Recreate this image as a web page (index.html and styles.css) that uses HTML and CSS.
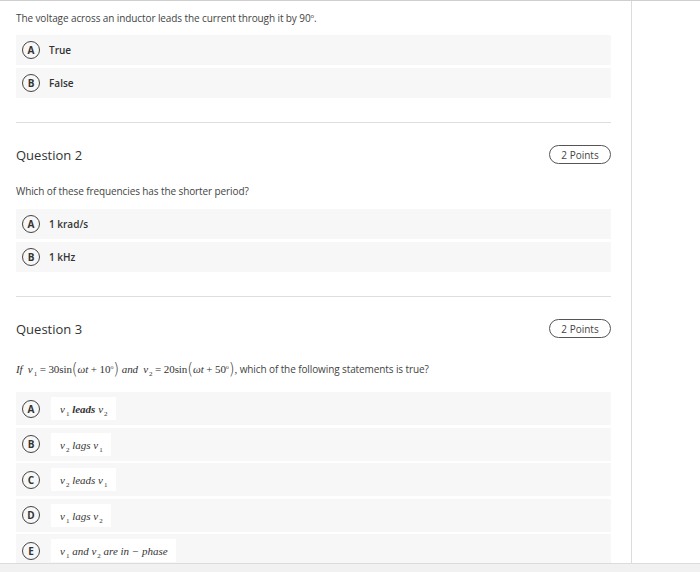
FILE: index.html
```html
<!DOCTYPE html>
<html>
<head>
<meta charset="utf-8">
<link rel="stylesheet" href="styles.css">
</head>
<body>
<div class="page">
  <div class="main">
    <div class="content">
      <div class="question first">
        <p class="qtext">The voltage across an inductor leads the current through it by 90<sup>o</sup>.</p>
        <div class="opt"><span class="letter">A</span><span class="otext">True</span></div>
        <div class="opt"><span class="letter">B</span><span class="otext">False</span></div>
      </div>

      <div class="question">
        <div class="qhead"><h2>Question 2</h2><span class="points">2 Points</span></div>
        <p class="qtext">Which of these frequencies has the shorter period?</p>
        <div class="opt"><span class="letter">A</span><span class="otext">1 krad/s</span></div>
        <div class="opt"><span class="letter">B</span><span class="otext">1 kHz</span></div>
      </div>

      <div class="question">
        <div class="qhead"><h2>Question 3</h2><span class="points">2 Points</span></div>
        <p class="qtext q3"><span class="math"><i>If</i> &nbsp;<i>v</i><sub>1</sub> = 30sin<span class="par">(</span><i>ωt</i> + 10<sup>o</sup><span class="par">)</span> <i>and</i> &nbsp;<i>v</i><sub>2</sub> = 20sin<span class="par">(</span><i>ωt</i> + 50<sup>o</sup><span class="par">)</span>,</span> which of the following statements is true?</p>
        <div class="opt tall"><span class="letter">A</span><span class="mbox">v<sub>1</sub> <b>leads</b> v<sub>2</sub></span></div>
        <div class="opt tall"><span class="letter">B</span><span class="mbox">v<sub>2</sub> lags v<sub>1</sub></span></div>
        <div class="opt tall"><span class="letter">C</span><span class="mbox">v<sub>2</sub> leads v<sub>1</sub></span></div>
        <div class="opt tall"><span class="letter">D</span><span class="mbox">v<sub>1</sub> lags v<sub>2</sub></span></div>
        <div class="opt tall"><span class="letter">E</span><span class="mbox">v<sub>1</sub> and v<sub>2</sub> are in − phase</span></div>
      </div>
    </div>
    <div class="side"></div>
  </div>
  <div class="footer"></div>
</div>
</body>
</html>
```

FILE: styles.css
```css
html, body {
  margin: 0;
  padding: 0;
  background: #fff;
  overflow: hidden;
}
body {
  font-family: "Open Sans", "Liberation Sans", sans-serif;
  color: #333;
}
.page {
  width: 700px;
  height: 572px;
  display: flex;
  flex-direction: column;
  border-top: 1px solid #cfcfcf;
  box-sizing: border-box;
}
.main {
  flex: 1;
  display: flex;
  min-height: 0;
  overflow: hidden;
}
.content {
  width: 632px;
  box-sizing: border-box;
  padding: 0 20px 0 16px;
  border-right: 1px solid #dcdcdc;
  overflow: hidden;
}
.side {
  flex: 1;
}
.footer {
  height: 8px;
  background: #f1f1f1;
  border-top: 1px solid #dcdcdc;
}
.question {
  border-top: 1px solid #dedede;
  margin-top: 24px;
  padding-top: 22px;
}
.question.first {
  border-top: none;
  margin-top: 0;
  padding-top: 0;
}
.qhead {
  display: flex;
  justify-content: space-between;
  align-items: center;
  height: 19px;
}
h2 {
  margin: 0;
  font-size: 13px;
  font-weight: 400;
  color: #333;
}
.points {
  width: 62px;
  height: 19px;
  box-sizing: border-box;
  border: 1px solid #555;
  border-radius: 10px;
  font-size: 10px;
  color: #444;
  display: flex;
  align-items: center;
  justify-content: center;
}
.qtext {
  margin: 0;
  font-size: 10px;
  letter-spacing: -0.1px;
  color: #444;
  line-height: 14px;
  padding: 10px 0 10px;
}
.question:not(.first) .qtext {
  padding: 20px 0 11px;
}
.qtext sup {
  font-size: 6px;
  vertical-align: 4px;
  line-height: 0;
}
.question .qtext.q3 {
  line-height: 18px;
  padding: 22px 0 14px;
}
.math {
  font-family: "Liberation Serif", serif;
  font-size: 11px;
  letter-spacing: -0.1px;
  color: #333;
}
.math sub, .mbox sub {
  font-size: 7px;
  font-style: normal;
  vertical-align: -3px;
  line-height: 0;
  margin-left: 1px;
}
.math sup {
  font-size: 6px;
  vertical-align: 4px;
}
.par {
  font-style: normal;
  font-size: 15px;
  font-family: "DejaVu Sans", sans-serif;
  font-weight: 300;
  vertical-align: -1px;
  line-height: 0;
}
.opt {
  display: flex;
  align-items: center;
  height: 30px;
  background: #f7f7f7;
  padding-left: 6px;
  margin-bottom: 3px;
}
.opt.tall {
  height: 33px;
  margin-bottom: 2.5px;
}
.letter {
  width: 18px;
  height: 18px;
  box-sizing: border-box;
  border: 1px solid #444;
  border-radius: 50%;
  font-size: 10px;
  font-weight: 700;
  color: #333;
  display: flex;
  align-items: center;
  justify-content: center;
  margin-right: 9px;
  flex: none;
}
.otext {
  font-size: 10px;
  font-weight: 600;
  color: #333;
}
.mbox {
  background: #fff;
  font-family: "Liberation Serif", serif;
  font-style: italic;
  font-size: 11px;
  color: #333;
  padding: 6px 8px 5px 9px;
  margin-left: 2px;
}
.mbox b {
  font-weight: 700;
}
```
